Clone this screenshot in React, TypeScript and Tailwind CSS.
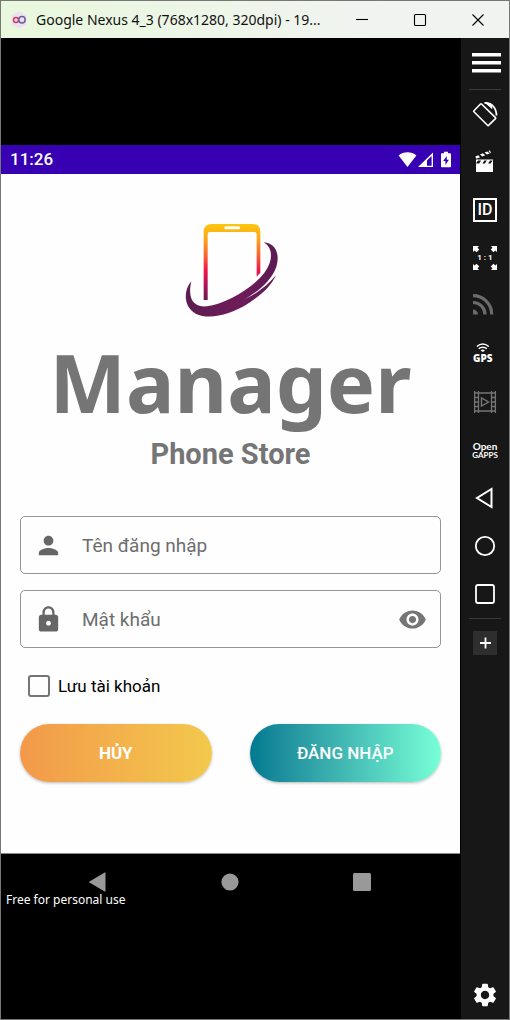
import type { ReactNode } from "react";
import { MdLock, MdPerson, MdSettings, MdVisibility } from "react-icons/md";

function TitleButton({ label, children }: { label: string; children: ReactNode }) {
  return (
    <button type="button" aria-label={label} className="flex h-full w-[58px] items-center justify-center text-black">
      <svg width="14" height="14" viewBox="0 0 14 14" fill="none" stroke="currentColor" strokeWidth="1.1">
        {children}
      </svg>
    </button>
  );
}

function TitleBar() {
  return (
    <header className="flex h-[37px] shrink-0 items-center bg-linear-to-r from-[#e9f8dd] to-[#f1f3f1] to-75% pr-[2px] font-['Noto_Sans',sans-serif]">
      <svg width="18" height="18" viewBox="0 0 18 18" fill="none" className="ml-[9px] shrink-0">
        <path d="M9 .5 16.500 4v10L9 17.500 1.500 14V4Z" fill="#e9e3ee" />
        <circle cx="6" cy="9" r="2.500" stroke="#d9385f" strokeWidth="1.500" />
        <circle cx="12" cy="8.700" r="3.200" stroke="#735c9e" strokeWidth="1.500" />
      </svg>
      <h1 className="ml-2 min-w-0 flex-1 overflow-hidden whitespace-nowrap text-[14px] text-[#111]">
        Google Nexus 4_3 (768x1280, 320dpi) - 19...
      </h1>
      <div className="flex h-full shrink-0">
        <TitleButton label="Minimize">
          <path d="M1 6.500h12" />
        </TitleButton>
        <TitleButton label="Maximize">
          <rect x="1.500" y="1.500" width="11" height="11" rx="1" />
        </TitleButton>
        <TitleButton label="Close">
          <path d="M1.500 1.500l11 11M12.500 1.500l-11 11" />
        </TitleButton>
      </div>
    </header>
  );
}

function StatusBar() {
  return (
    <div className="flex h-[29px] shrink-0 items-center justify-between bg-[#3700b3] pl-[9px] pr-2 text-white">
      <span className="text-[17px] font-medium leading-none">11:26</span>
      <svg width="54" height="17" viewBox="0 0 54 17" fill="currentColor">
        <path d="M9.500 16 .6 4.500C5.500.2 13.500.2 18.400 4.500Z" />
        <path fillRule="evenodd" d="M20 16 35 1.500V16ZM29 14.700h4.600V5L29 9.400Z" />
        <path
          fillRule="evenodd"
          d="M46 .8h4v1.400h2.200a.8.8 0 0 1 .8.800v12.400a.8.8 0 0 1-.8.800h-8.400a.8.8 0 0 1-.8-.8V3a.8.8 0 0 1 .8-.8H46ZM48.800 5l-3.600 5h2.200v4l3.500-5.200h-2.100Z"
        />
      </svg>
    </div>
  );
}

function Logo() {
  return (
    <svg width="120" height="120" viewBox="0 0 360 360" role="img" aria-label="Phone store logo">
      <defs>
        <linearGradient id="phoneBody" gradientUnits="userSpaceOnUse" x1="0" y1="42" x2="0" y2="272">
          <stop offset="0" stopColor="#fbc80d" />
          <stop offset="0.2" stopColor="#fba41c" />
          <stop offset="0.42" stopColor="#f9602f" />
          <stop offset="0.6" stopColor="#f0164d" />
          <stop offset="0.82" stopColor="#a71558" />
          <stop offset="1" stopColor="#651b52" />
        </linearGradient>
        <linearGradient id="swoosh" x1="0" y1="0" x2="1" y2="0">
          <stop offset="0" stopColor="#5c1d4f" />
          <stop offset="0.6" stopColor="#6e1c59" />
          <stop offset="1" stopColor="#5b1b55" />
        </linearGradient>
      </defs>
      <path
        fill="url(#phoneBody)"
        fillRule="evenodd"
        d="M98 270V66q0-24 24-24H244q24 0 24 24V188L257 200V73q0-7-7-7H117q-7 0-7 7V270ZM164 49q-4 0-4 4.500t4 4.500H203q4 0 4-4.500t-4-4.500Z"
      />
      <path
        fill="url(#swoosh)"
        d="M61 214C36 242 38 292 74 311C117 331 178 313 229 282C267 258 300 230 315 195C293 223 263 247 216 271C256 248 301 214 316 170C328 130 312 99 278 97C305 112 306 146 287 178C256 230 165 282 108 289C67 292 49 266 61 214Z"
      />
    </svg>
  );
}

function Field({
  id,
  label,
  type,
  icon,
  trailing,
}: {
  id: string;
  label: string;
  type: string;
  icon: ReactNode;
  trailing?: ReactNode;
}) {
  return (
    <div className="flex h-[58px] items-center rounded-[5px] border border-[#959595] px-[13px] text-[29px] text-[#666]">
      <label htmlFor={id} aria-label={label} className="shrink-0">
        {icon}
      </label>
      <input
        id={id}
        type={type}
        placeholder={label}
        className="ml-[19px] h-full min-w-0 flex-1 bg-transparent text-[19px] text-black outline-none placeholder:text-[#6d6d6d]"
      />
      {trailing}
    </div>
  );
}

function LoginScreen() {
  return (
    <main className="flex flex-col bg-[#fefefe] px-[19px] pb-[71px] pt-9 text-[#757575]">
      <div className="flex flex-col items-center">
        <Logo />
        <h2 className="mt-3 font-['Noto_Sans',sans-serif] text-[81px] font-bold leading-[80px]">Manager</h2>
        <p className="mt-3 text-[29px] font-bold leading-[40px]">Phone Store</p>
      </div>
      <form className="mt-[42px] flex flex-col" onSubmit={(event) => event.preventDefault()}>
        <div className="flex flex-col gap-4">
          <Field id="username" label="Tên đăng nhập" type="text" icon={<MdPerson />} />
          <Field
            id="password"
            label="Mật khẩu"
            type="password"
            icon={<MdLock />}
            trailing={
              <button type="button" aria-label="Hiện mật khẩu" className="shrink-0 text-[#757575]">
                <MdVisibility />
              </button>
            }
          />
        </div>
        <div className="flex h-[76px] items-center gap-2 pl-2">
          <input
            id="remember"
            type="checkbox"
            className="size-[22px] shrink-0 appearance-none rounded-[3px] border-2 border-[#757575] checked:bg-[#757575]"
          />
          <label htmlFor="remember" className="pt-[2px] text-[17px] text-black">
            Lưu tài khoản
          </label>
        </div>
        <div className="grid grid-cols-2 gap-[38px] text-[17px] text-white">
          <button
            type="button"
            className="h-[58px] rounded-full bg-linear-to-r from-[#f2994a] to-[#f2c94c] pt-[2px] font-bold shadow-[0_1px_3px_rgba(0,0,0,0.28)]"
          >
            HỦY
          </button>
          <button
            type="submit"
            className="h-[58px] rounded-full bg-linear-to-r from-[#007991] to-[#78ffd6] pt-[2px] font-medium shadow-[0_1px_3px_rgba(0,0,0,0.28)]"
          >
            ĐĂNG NHẬP
          </button>
        </div>
      </form>
    </main>
  );
}

function NavButton({ label, children }: { label: string; children: ReactNode }) {
  return (
    <button type="button" aria-label={label} className="flex items-center justify-center text-[#999]">
      <svg width="20" height="20" viewBox="0 0 20 20" fill="currentColor">
        {children}
      </svg>
    </button>
  );
}

function Phone() {
  return (
    <div className="relative flex flex-col">
      <StatusBar />
      <LoginScreen />
      <nav className="grid h-[59px] grid-cols-3 border-t border-[#8a8a8a] bg-black px-8 pb-[2px]">
        <NavButton label="Back">
          <path d="M16.500 1v18q0 .8-.8.400L.5 10.500q-.8-.5 0-1L15.700.5q.8-.4.8.5Z" />
        </NavButton>
        <NavButton label="Home">
          <circle cx="10" cy="10" r="8.600" />
        </NavButton>
        <NavButton label="Recent apps">
          <rect x="1" y="1" width="18" height="18" rx="1.500" />
        </NavButton>
      </nav>
      <p className="absolute bottom-1 left-[5px] font-['Noto_Sans',sans-serif] text-[12px] leading-4 text-white">
        Free for personal use
      </p>
    </div>
  );
}

function Tool({ label, children, text }: { label: string; children?: ReactNode; text?: ReactNode }) {
  return (
    <button type="button" aria-label={label} className="relative h-12 w-12 shrink-0 text-white">
      <svg width="48" height="48" viewBox="0 0 48 48" fill="none" stroke="currentColor" strokeWidth="1.800">
        {children}
      </svg>
      {text}
    </button>
  );
}

function Divider() {
  return <hr className="mx-2 h-px w-8 shrink-0 border-0 bg-[#3b3b3b]" />;
}

function Toolbar() {
  return (
    <aside className="flex w-12 shrink-0 flex-col bg-[#171717]">
      <button type="button" aria-label="Menu" className="flex h-[51px] w-full items-center justify-end pr-2 text-white">
        <svg width="29" height="22" viewBox="0 0 29 22" fill="currentColor">
          <path d="M0 0h29v3.500H0zM0 8h29v3.500H0zM0 16h29v3.500H0z" />
        </svg>
      </button>
      <Divider />
      <Tool label="Rotate">
        <path d="M12.900 21.700q-.5-.5 0-1l6.600-6.700q.5-.5 1 0l14 13.600q.5.5 0 1l-7 6.700q-.5.5-1 0Z" strokeWidth="1.600" />
        <path d="M23.500 13C31 12.500 35.300 18 35.500 25.500" />
        <path d="M24 12.500 31 18.500l-1-4.500Z" fill="currentColor" strokeWidth="1" />
      </Tool>
      <Tool label="Record">
        <g fill="currentColor" stroke="none">
          <path d="M15 25.500h17V34H15zM15 21.500h17v1H15zM15 21.500h2.500l-2.500 4zM20.500 22h3.200l-2.700 4h-3.200zM26.200 22h3.200l-2.700 4h-3.200zM32 22v4h-2.800z" />
          <path d="M14.300 18.500l3-1.200 1.800 2-3.800 1.500zM19 16.500l2.800-1.200 2.500 1.900-3 1.200zM23.600 14.600l2.600-1.100 2.600 1.900-2.900 1.100zM27.500 12.900l1.400-.6 1 2.700-.6.200z" />
        </g>
      </Tool>
      <Tool
        label="Identifiers"
        text={
          <span className="absolute inset-0 flex items-center justify-center text-[16px] font-medium leading-none">
            ID
          </span>
        }
      >
        <rect x="13" y="13" width="22" height="22" strokeWidth="2" />
      </Tool>
      <Tool
        label="Pixel perfect"
        text={
          <span className="absolute inset-0 flex items-center justify-center whitespace-pre text-[8px] font-bold leading-none">
            1 : 1
          </span>
        }
      >
        <g fill="currentColor" stroke="none">
          <path id="corner" d="M12 12h6l-1.500 1.700 1.800 1.800-2.800 2.800-1.800-1.800L12 18z" />
          <use href="#corner" transform="matrix(-1 0 0 1 48 0)" />
          <use href="#corner" transform="matrix(1 0 0 -1 0 48)" />
          <use href="#corner" transform="matrix(-1 0 0 -1 48 48)" />
        </g>
      </Tool>
      <Tool label="Network">
        <g className="text-[#6b6b6b]" stroke="currentColor" strokeWidth="3.200">
          <path d="M12 13.700A18.700 18.700 0 0 1 30.700 32.400M12 20.500A12 12 0 0 1 24 32.400" />
          <path d="M12 27.500a5 5 0 0 1 5 4.900h-5z" fill="currentColor" stroke="none" />
        </g>
      </Tool>
      <Tool
        label="GPS"
        text={
          <span className="absolute left-3 top-6 font-['Open_Sans',sans-serif] text-[10px] font-extrabold leading-2">
            GPS
          </span>
        }
      >
        <path d="M15.800 16.500q6-5 12 0M17.700 18.700q4-3 8.200 0" strokeWidth="1.500" />
        <path d="M19.600 20.400q2.200-1.600 4.400 0L21.800 22Z" fill="currentColor" stroke="none" />
      </Tool>
      <Tool label="Screencast">
        <g className="text-[#757575]" stroke="currentColor" strokeWidth="1.300">
          <path d="M13.600 13v22M17.500 13v22M30.500 13v22M34.400 13v22M17.500 15h13M17.500 33h13" />
          <path d="M13.600 15h4M13.600 19.500h4M13.600 24h4M13.600 28.500h4M13.600 33h4M30.500 15h4M30.500 19.500h4M30.500 24h4M30.500 28.500h4M30.500 33h4" />
          <path d="M20.500 20v8l7-4Z" strokeWidth="1.400" />
        </g>
      </Tool>
      <Tool
        label="Open GAPPS"
        text={
          <span className="absolute inset-0 flex flex-col items-center justify-center font-['Lato',sans-serif]">
            <span className="text-[10px] font-bold leading-[9px]">Open</span>
            <span className="text-[8px] font-bold leading-2">GAPPS</span>
          </span>
        }
      />
      <Tool label="Back">
        <path d="M30.500 15v18L16 24Z" strokeWidth="2" />
      </Tool>
      <Tool label="Home">
        <circle cx="24" cy="24" r="9.200" />
      </Tool>
      <Tool label="Recent apps">
        <rect x="15" y="15" width="18" height="18" rx="2" />
      </Tool>
      <Divider />
      <Tool label="Add">
        <rect x="12" y="12" width="24" height="24" fill="#2e2e2e" stroke="none" />
        <path d="M24.500 18.500v11M19 24h11" strokeWidth="1.800" />
      </Tool>
      <button
        type="button"
        aria-label="Settings"
        className="mt-auto flex h-12 w-12 shrink-0 items-center justify-center text-[28px] text-white"
      >
        <MdSettings />
      </button>
    </aside>
  );
}

export default function App() {
  return (
    <div className="flex min-h-screen flex-col border border-[#777] bg-black font-['Roboto',sans-serif]">
      <TitleBar />
      <div className="flex flex-1">
        <div className="flex min-w-0 flex-1 flex-col justify-center border-r border-black">
          <Phone />
        </div>
        <Toolbar />
      </div>
    </div>
  );
}
